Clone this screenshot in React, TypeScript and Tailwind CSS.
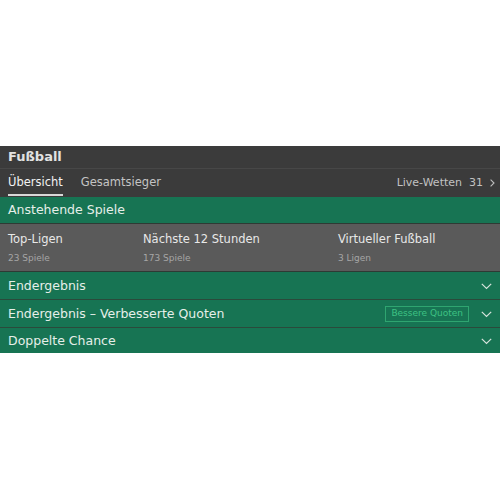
import React from "react";

const Chevron = () => (
  <svg width="11" height="7" viewBox="0 0 11 7" fill="none" className="shrink-0">
    <path d="M0.8 0.8 L5.5 5.5 L10.2 0.8" stroke="#d6e3dc" strokeWidth="1.2" />
  </svg>
);

const Row = ({ label, badge, h }: { label: string; badge?: boolean; h: string }) => (
  <div className={`flex ${h} items-center bg-[#177453] pl-2 pr-[8px] pt-[1px]`}>
    <span className="flex-1 text-[12.5px] text-[#e6efe9]">{label}</span>
    {badge && (
      <span className="mr-[12px] flex h-[16px] items-center border border-[#2fa570] px-[5px] text-[9px] text-[#3ec283]">
        Bessere Quoten
      </span>
    )}
    <Chevron />
  </div>
);

export default function App() {
  return (
    <div className="w-[500px] h-[500px] bg-white" style={{ fontFamily: '"DejaVu Sans", sans-serif' }}>
      <div className="h-[146px]" />
      <div className="bg-[#3b3b3b]">
        <div className="flex h-[22px] items-center px-2 text-[13px] font-bold text-[#e2e2e2]">Fußball</div>
        <div className="h-px bg-[#474747]" />
        <div className="flex h-[28px] items-center pl-2 pr-[5px]">
          <div className="relative flex h-full items-center text-[11.5px] text-[#f2f2f2]">
            Übersicht
            <div className="absolute bottom-[1px] left-0 right-0 h-[2px] bg-[#d8d8d8]" />
          </div>
          <div className="ml-[18px] text-[11.5px] text-[#c4c4c4]">Gesamtsieger</div>
          <div className="ml-auto flex items-center text-[11px] text-[#c2c2c2]">
            <span>Live-Wetten</span>
            <span className="ml-[7px]">31</span>
            <svg width="5" height="8" viewBox="0 0 5 8" fill="none" className="ml-[7px]">
              <path d="M0.6 0.6 L4 4 L0.6 7.4" stroke="#bdbdbd" strokeWidth="1.1" />
            </svg>
          </div>
        </div>
      </div>
      <div className="flex h-[26px] items-center bg-[#177453] px-2 text-[12.5px] text-[#e6efe9]">Anstehende Spiele</div>
      <div className="h-px bg-[#2e3a34]" />
      <div className="flex h-[47px] bg-[#5a5a5a] px-2 pt-[8px]">
        <div className="w-[135px]">
          <div className="text-[11.5px] leading-[14px] text-[#e8e8e8]">Top-Ligen</div>
          <div className="mt-[6px] text-[9px] text-[#a6a6a6]">23 Spiele</div>
        </div>
        <div className="w-[195px]">
          <div className="text-[11.5px] leading-[14px] text-[#e8e8e8]">Nächste 12 Stunden</div>
          <div className="mt-[6px] text-[9px] text-[#a6a6a6]">173 Spiele</div>
        </div>
        <div>
          <div className="text-[11.5px] leading-[14px] text-[#e8e8e8]">Virtueller Fußball</div>
          <div className="mt-[6px] text-[9px] text-[#a6a6a6]">3 Ligen</div>
        </div>
      </div>
      <div className="h-px bg-[#2e3a34]" />
      <Row label="Endergebnis" h="h-[27px]" />
      <div className="h-px bg-[#2a4a3b]" />
      <Row label="Endergebnis – Verbesserte Quoten" badge h="h-[27px]" />
      <div className="h-px bg-[#2a4a3b]" />
      <Row label="Doppelte Chance" h="h-[25px]" />
    </div>
  );
}
